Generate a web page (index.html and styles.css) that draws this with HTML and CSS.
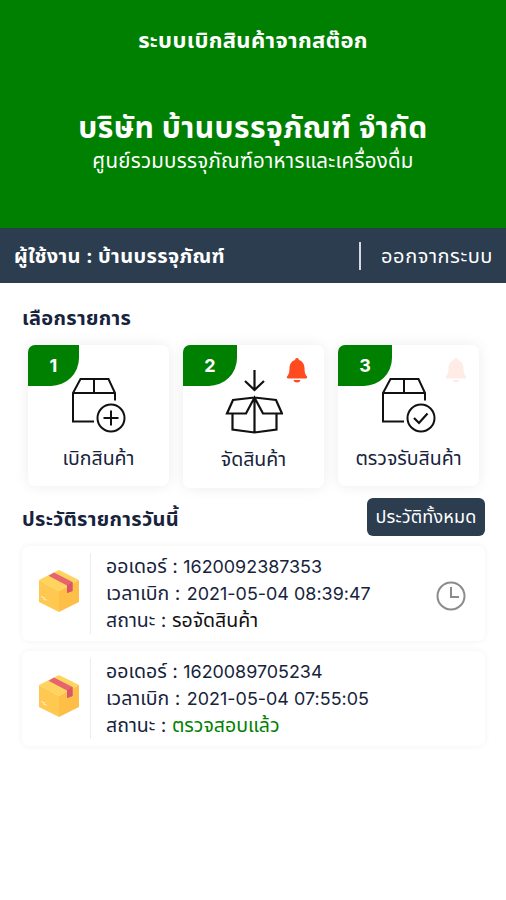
FILE: index.html
```html
<!DOCTYPE html>
<html lang="th">
<head>
    <meta charset="UTF-8">
    <meta name="viewport" content="width=device-width, initial-scale=1.0">
    <title>ระบบเบิกสินค้าจากสต๊อก</title>
    <link rel="stylesheet" href="styles.css">
</head>
<body>

    <!-- Shared icons -->
    <svg class="icon-defs" width="0" height="0">
        <symbol id="icon-box" viewBox="0 0 56 56">
            <path d="M45 23.500V16L38.500 2H10.500L3 16v28.500h21M3 16h42M24 2v14" fill="none" stroke="currentColor" stroke-width="2"/>
            <circle cx="41" cy="41" r="13.500" fill="none" stroke="currentColor" stroke-width="2"/>
        </symbol>
        <symbol id="icon-bell" viewBox="0 0 22 25">
            <path d="M11 0c1.3 0 1.9.8 1.9 2 3.5 1 5.5 4 5.6 8 .1 5 1 6.800 2.300 8.300.9 1.200.3 2.200-1 2.200H2.200c-1.300 0-1.900-1-1-2.200C2.500 16.800 3.400 15 3.500 10c.1-4 2.100-7 5.600-8 0-1.200.6-2 1.900-2zM7.500 22h7c-.4 1.700-1.700 2.500-3.500 2.500S7.900 23.700 7.500 22z" fill="currentColor"/>
        </symbol>
        <symbol id="icon-parcel" viewBox="0 0 42 44">
            <path d="M21 1L41 11 21 22 1 11z" fill="#ffd45e"/>
            <path d="M1 11l20 11v21L1 33z" fill="#ffc850"/>
            <path d="M41 11L21 22v21l20-10z" fill="#fdbf48"/>
            <path d="M16 3.500L34.500 13v9L29 24v-7.500L10.500 6.800z" fill="#e5646e"/>
            <path d="M29 16.500l5.500-3.500v9L29 24z" fill="#d9566a"/>
            <path d="M3 27.500l4 1.500M5 29.800l4 1.500" stroke="#fff0c4" stroke-width="1"/>
        </symbol>
    </svg>

    <header class="header">
        <h1 class="system-name">ระบบเบิกสินค้าจากสต๊อก</h1>
        <h2 class="company">บริษัท บ้านบรรจุภัณฑ์ จำกัด</h2>
        <p class="slogan">ศูนย์รวมบรรจุภัณฑ์อาหารและเครื่องดื่ม</p>
    </header>

    <nav class="userbar">
        <span class="user">ผู้ใช้งาน : บ้านบรรจุภัณฑ์</span>
        <a class="logout">ออกจากระบบ</a>
    </nav>

    <main class="container">
        <h3 class="title menu-title">เลือกรายการ</h3>

        <div class="menu">
            <div class="menu-card">
                <span class="number">1</span>
                <svg class="menu-icon" viewBox="1 0 56 56">
                    <use href="#icon-box" width="56" height="56"/>
                    <path d="M41 33.500v15M33.500 41h15" fill="none" stroke="currentColor" stroke-width="2"/>
                </svg>
                <span class="menu-label">เบิกสินค้า</span>
            </div>
            <div class="menu-card tall">
                <span class="number">2</span>
                <svg class="bell" viewBox="0 0 22 25"><use href="#icon-bell"/></svg>
                <svg class="menu-icon open-box" viewBox="0 0 58 64">
                    <path d="M29.500 0v20M20 11l9.500 9 9.500-9M29.500 27.500L8 30 2 43.500h19l8.500-16L38 43.500h19L51 30zM29.500 27.500v35M7.500 43.500v16l22 3 22-3v-16" fill="none" stroke="currentColor" stroke-width="2.200"/>
                </svg>
                <span class="menu-label">จัดสินค้า</span>
            </div>
            <div class="menu-card">
                <span class="number">3</span>
                <svg class="bell off" viewBox="0 0 22 25"><use href="#icon-bell"/></svg>
                <svg class="menu-icon" viewBox="1 0 56 56">
                    <use href="#icon-box" width="56" height="56"/>
                    <path d="M34 41l5 5 8.500-9.500" fill="none" stroke="currentColor" stroke-width="2.200"/>
                </svg>
                <span class="menu-label">ตรวจรับสินค้า</span>
            </div>
        </div>

        <div class="history-head">
            <h3 class="title history-title">ประวัติรายการวันนี้</h3>
            <button class="btn-all">ประวัติทั้งหมด</button>
        </div>

        <div class="order">
            <svg class="parcel" viewBox="0 0 42 44"><use href="#icon-parcel"/></svg>
            <div class="order-info">
                <p>ออเดอร์ : <span class="num">1620092387353</span></p>
                <p>เวลาเบิก : <span class="num time">2021-05-04 08:39:47</span></p>
                <p>สถานะ : <span class="waiting">รอจัดสินค้า</span></p>
            </div>
            <svg class="clock" viewBox="0 0 30 30">
                <circle cx="15" cy="15" r="13.500"/>
                <path d="M15 6v10h8"/>
            </svg>
        </div>

        <div class="order">
            <svg class="parcel" viewBox="0 0 42 44"><use href="#icon-parcel"/></svg>
            <div class="order-info">
                <p>ออเดอร์ : <span class="num">1620089705234</span></p>
                <p>เวลาเบิก : <span class="num time">2021-05-04 07:55:05</span></p>
                <p>สถานะ : <span class="checked">ตรวจสอบแล้ว</span></p>
            </div>
        </div>
    </main>

</body>
</html>
```
FILE: styles.css
```css
* {
    box-sizing: border-box;
}

body {
    margin: 0;
    min-height: 900px;
    background-color: #fff;
    color: #17233c;
    font-family: Inter, "Noto Sans Thai", "Noto Sans", sans-serif;
    font-size: 18px;
    white-space: nowrap;
}

h1, h2, h3, p {
    margin: 0;
}

.icon-defs {
    display: block;
}

.header {
    height: 228px;
    padding-top: 24px;
    background-color: #008000;
    color: #fff;
    text-align: center;
}

.system-name {
    font-size: 22px;
    letter-spacing: 0.35px;
    line-height: 32px;
}

.company {
    margin-top: 51px;
    font-size: 30px;
    letter-spacing: 0.45px;
    line-height: 40px;
}

.slogan {
    font-size: 20.5px;
    letter-spacing: 0.25px;
    line-height: 28px;
}

.userbar {
    display: flex;
    align-items: center;
    justify-content: space-between;
    height: 55px;
    padding: 0 13px 0 14px;
    background-color: #2c3d50;
    color: #fff;
}

.user {
    padding-top: 2px;
    font-size: 20px;
    font-weight: bold;
    letter-spacing: 0.35px;
}

.logout {
    padding: 1px 0 0 20px;
    border-left: 2px solid #d5d8dc;
    font-size: 20px;
    letter-spacing: 0.55px;
    line-height: 27px;
}

.container {
    padding: 0 21px 0 22px;
}

.title {
    font-size: 20px;
    letter-spacing: 0.3px;
    line-height: 30px;
}

.menu-title {
    padding: 20px 0 12px;
}

.menu {
    display: grid;
    grid-template-columns: repeat(3, 141px);
    align-items: start;
    gap: 14px;
    height: 153px;
    padding-left: 6px;
}

.menu-card {
    position: relative;
    display: flex;
    flex-direction: column;
    align-items: center;
    height: 141px;
    padding-top: 32px;
    background-color: #fff;
    border-radius: 7px;
    box-shadow: 0 0 14px rgba(0, 0, 0, 0.08);
}

.menu-card.tall {
    height: 143px;
    padding-top: 25px;
}

.number {
    position: absolute;
    top: 0;
    left: 0;
    width: 51px;
    height: 41px;
    border-radius: 7px 0 28px 0;
    background-color: #008000;
    color: #fff;
    font-weight: bold;
    line-height: 41px;
    text-align: center;
}

.tall .number,
.tall + .menu-card .number {
    width: 54px;
}

.bell {
    position: absolute;
    top: 13px;
    right: 16px;
    width: 22px;
    height: 25px;
    color: #ff4b1f;
}

.bell.off {
    right: 12px;
    opacity: 0.1;
}

.menu-icon {
    width: 56px;
    height: 56px;
    color: #111;
}

.open-box {
    width: 58px;
    height: 64px;
}

.menu-label {
    margin-top: 10px;
    font-size: 19.5px;
    line-height: 30px;
}

.history-head {
    display: flex;
    align-items: center;
    justify-content: space-between;
}

.history-title {
    padding-top: 3px;
}

.btn-all {
    width: 118px;
    height: 38px;
    padding: 0;
    border: none;
    border-radius: 6px;
    background-color: #2c3d50;
    color: #fff;
    font-family: inherit;
    font-size: 18px;
    letter-spacing: 0.15px;
}

.order {
    display: flex;
    align-items: center;
    height: 95px;
    margin-top: 10px;
    padding: 0 19px 0 16px;
    border-radius: 7px;
    box-shadow: 0 0 6px rgba(0, 0, 0, 0.06);
}

.parcel {
    width: 42px;
    height: 44px;
    margin-bottom: 5px;
}

.order-info {
    flex: 1;
    height: 81px;
    margin-left: 10px;
    padding-left: 15px;
    border-left: 1px solid #ececec;
    font-size: 19.5px;
    line-height: 27px;
}

.num {
    font-size: 17.9px;
}

.time {
    margin-left: 1px;
    letter-spacing: 0.03px;
}

.waiting {
    color: #111;
}

.checked {
    color: #008000;
}

.clock {
    width: 30px;
    height: 30px;
    margin-top: 4px;
    fill: none;
    stroke: #8b8b8b;
    stroke-width: 2;
}
```
